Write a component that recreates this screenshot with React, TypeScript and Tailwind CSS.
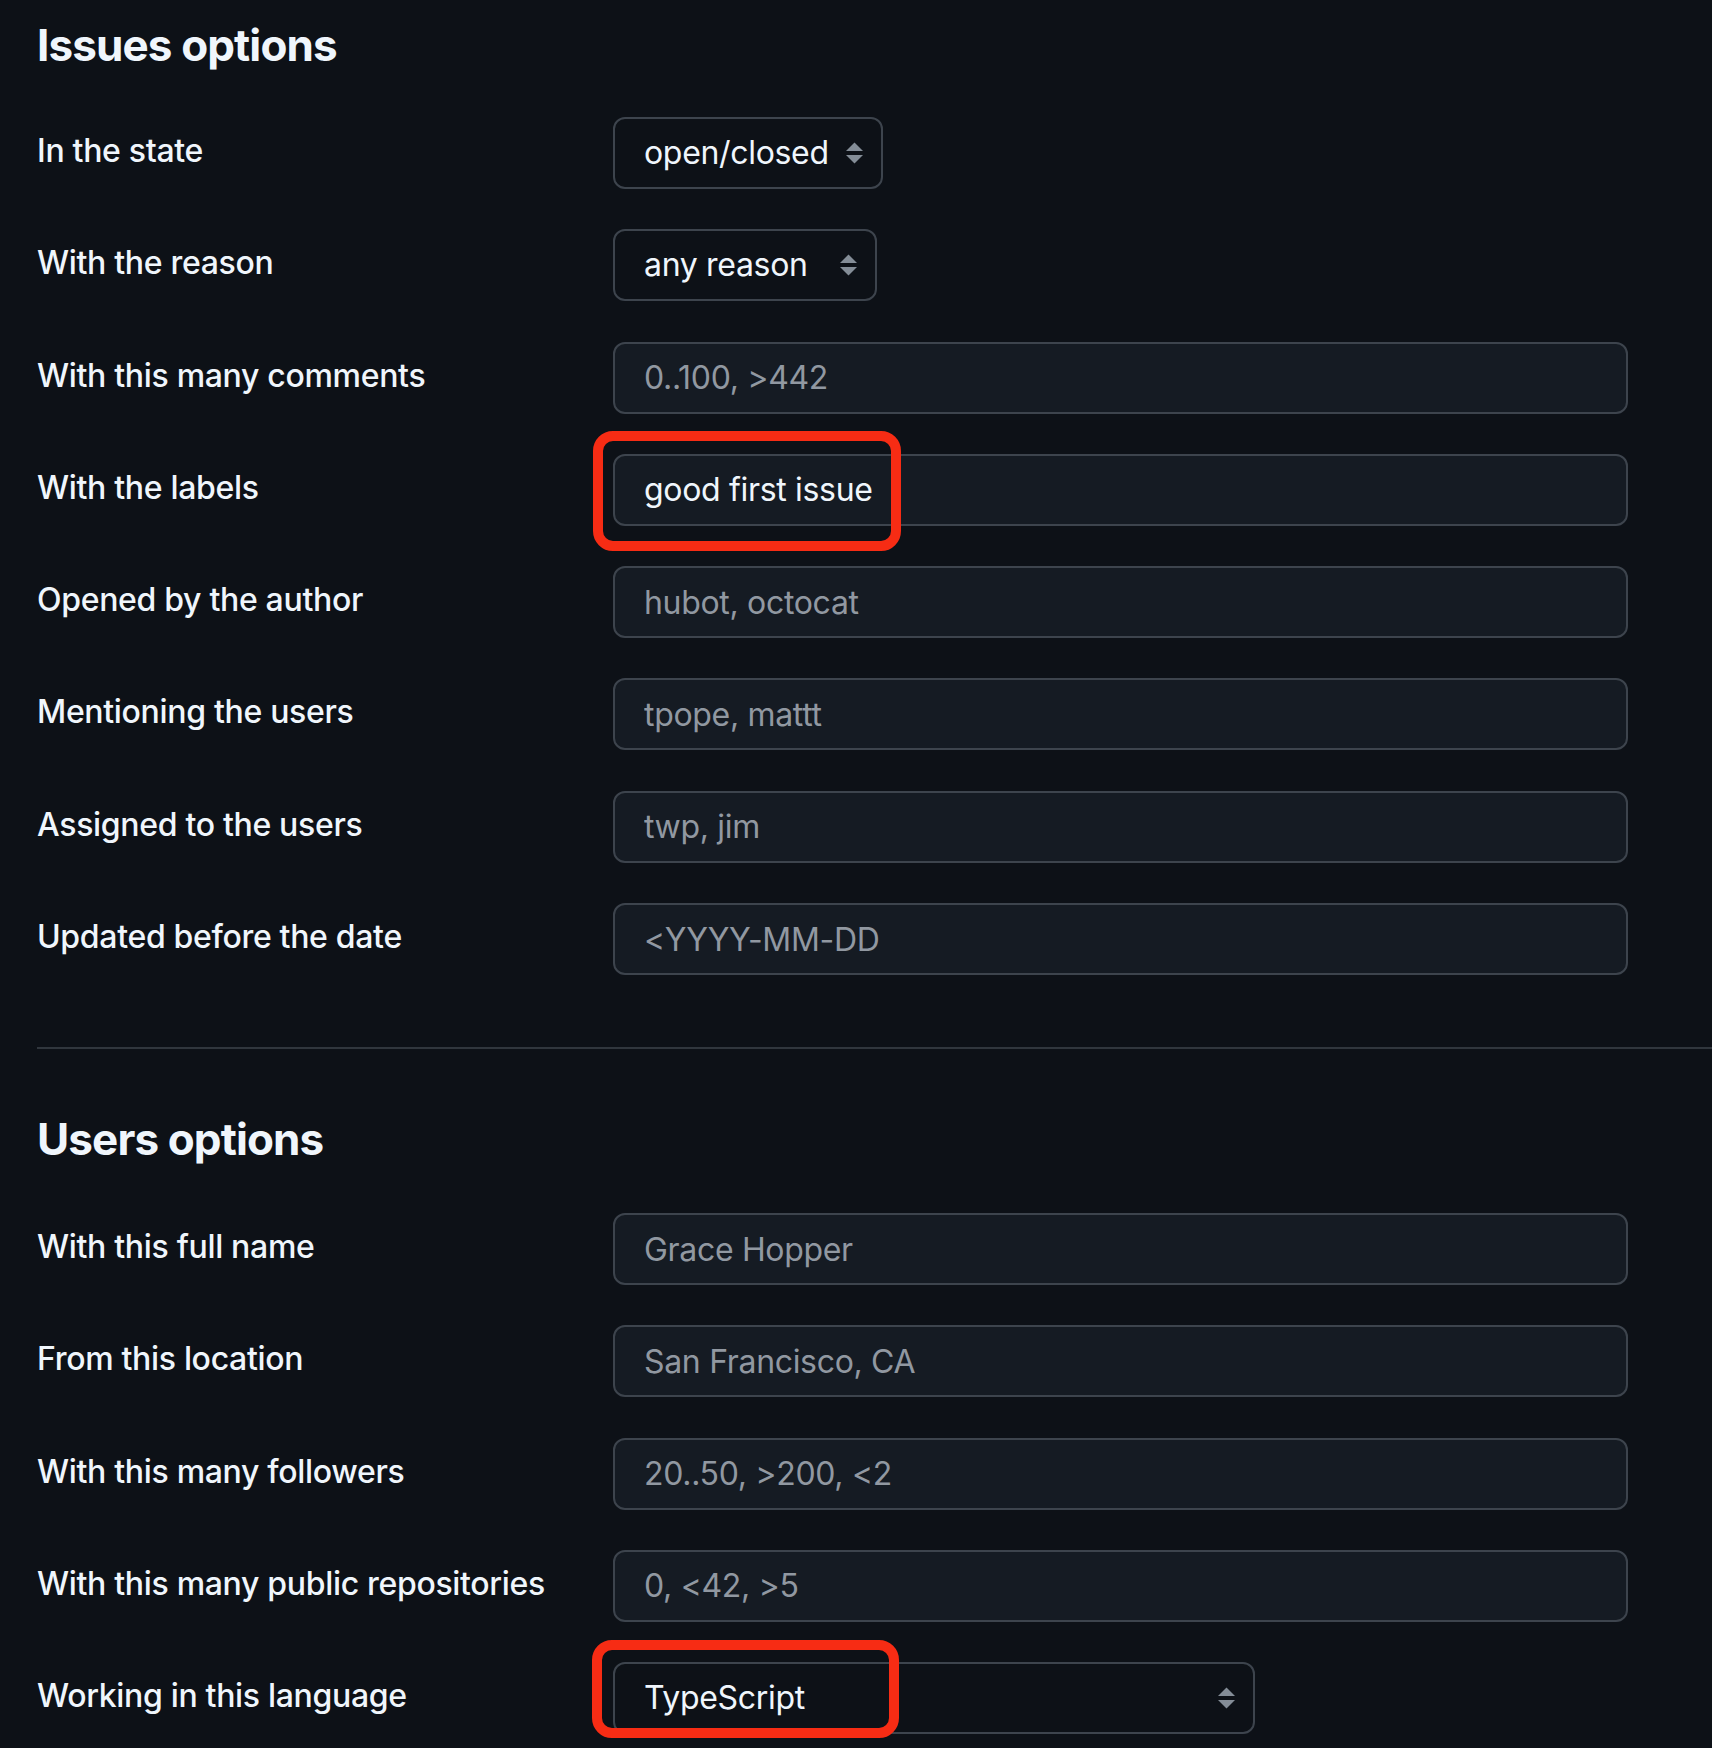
import React from "react";

type Field =
  | { label: string; kind: "select"; value: string; width: string }
  | { label: string; kind: "input"; value?: string; placeholder?: string; marked?: boolean };

const issueFields: Field[] = [
  { label: "In the state", kind: "select", value: "open/closed", width: "w-[270px]" },
  { label: "With the reason", kind: "select", value: "any reason", width: "w-[264px]" },
  { label: "With this many comments", kind: "input", placeholder: "0..100, >442" },
  { label: "With the labels", kind: "input", value: "good first issue", marked: true },
  { label: "Opened by the author", kind: "input", placeholder: "hubot, octocat" },
  { label: "Mentioning the users", kind: "input", placeholder: "tpope, mattt" },
  { label: "Assigned to the users", kind: "input", placeholder: "twp, jim" },
  { label: "Updated before the date", kind: "input", placeholder: "<YYYY-MM-DD" }
];

const userFields: Field[] = [
  { label: "With this full name", kind: "input", placeholder: "Grace Hopper" },
  { label: "From this location", kind: "input", placeholder: "San Francisco, CA" },
  { label: "With this many followers", kind: "input", placeholder: "20..50, >200, <2" },
  { label: "With this many public repositories", kind: "input", placeholder: "0, <42, >5" }
];

function SelectArrows() {
  return (
    <svg
      width="17"
      height="22"
      viewBox="0 0 17 22"
      className="pointer-events-none absolute right-[20px] top-1/2 -translate-y-1/2"
    >
      <path d="M8.5 0.5 L17 9 L0 9 Z" fill="#848d97" />
      <path d="M0 13 L17 13 L8.5 21.5 Z" fill="#848d97" />
    </svg>
  );
}

function Marker({ className }: { className: string }) {
  return (
    <span
      className={`pointer-events-none absolute rounded-[20px] border-[10px] border-[#f72c14] ${className}`}
    />
  );
}

function SelectBox({ value, width, marked }: { value: string; width: string; marked?: boolean }) {
  return (
    <div className={`relative h-[72px] shrink-0 ${width}`}>
      <select
        defaultValue={value}
        className="h-full w-full appearance-none rounded-[12px] border-2 border-[#3d444d] bg-[#0d1117] pl-[29px] pr-[50px] text-[32px] tracking-[-0.01em] text-[#f0f6fc] outline-none"
      >
        <option value={value}>{value}</option>
      </select>
      <SelectArrows />
      {marked ? <Marker className="-left-[21px] -top-[22px] h-[98px] w-[307px]" /> : null}
    </div>
  );
}

function Row({ field }: { field: Field }) {
  return (
    <div className="flex items-center">
      <label className="mb-[4px] w-[576px] shrink-0 text-[32px] font-medium tracking-[-0.01em] text-[#f0f6fc]">
        {field.label}
      </label>
      {field.kind === "select" ? (
        <SelectBox value={field.value} width={field.width} />
      ) : (
        <div className="relative h-[72px] w-[1015px] shrink-0">
          <input
            type="text"
            defaultValue={field.value}
            placeholder={field.placeholder}
            className="h-full w-full rounded-[12px] border-2 border-[#3d444d] bg-[#151b23] pl-[29px] text-[32px] tracking-[-0.01em] text-[#f0f6fc] outline-none placeholder:text-[#9198a1]"
          />
          {field.marked ? <Marker className="-left-[20px] -top-[23px] h-[120px] w-[308px]" /> : null}
        </div>
      )}
    </div>
  );
}

function Heading({ children }: { children: React.ReactNode }) {
  return (
    <h2 className="h-[56px] text-[44px] leading-[56px] font-bold tracking-[-0.02em] text-[#f0f6fc]">
      {children}
    </h2>
  );
}

export default function App() {
  return (
    <div className="min-h-screen bg-[#0d1117] pl-[37px] pb-[14px] pt-[17px] font-[family-name:Inter,'Noto_Sans',sans-serif] antialiased">
      <section>
        <Heading>Issues options</Heading>
        <div className="mt-[44px] flex flex-col gap-[40.3px]">
          {issueFields.map((field) => (
            <Row key={field.label} field={field} />
          ))}
        </div>
      </section>

      <div className="mt-[72px] h-[2px] bg-[#30363d]" />

      <section className="mt-[62px]">
        <Heading>Users options</Heading>
        <div className="mt-[46px] flex flex-col gap-[40.3px]">
          {userFields.map((field) => (
            <Row key={field.label} field={field} />
          ))}
          <div className="flex items-center">
            <label className="mb-[4px] w-[576px] shrink-0 text-[32px] font-medium tracking-[-0.01em] text-[#f0f6fc]">
              Working in this language
            </label>
            <SelectBox value="TypeScript" width="w-[642px]" marked />
          </div>
        </div>
      </section>
    </div>
  );
}
